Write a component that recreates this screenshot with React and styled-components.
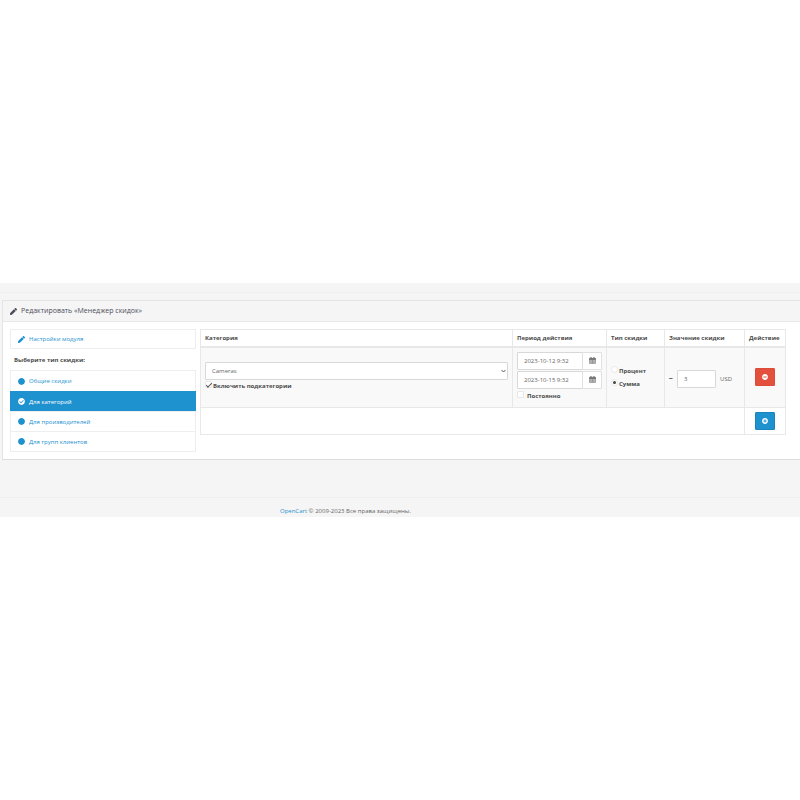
import React, { useState } from 'react';
import styled, { createGlobalStyle, css } from 'styled-components';
import { FaPen, FaCheckCircle, FaCircle, FaMinusCircle, FaPlusCircle } from 'react-icons/fa';

const GlobalStyle = createGlobalStyle`
  *, *::before, *::after { box-sizing: border-box; }
  body {
    margin: 0;
    background: #fff;
    color: #666;
    font-family: "Open Sans", "Noto Sans", sans-serif;
    font-size: 6px;
    line-height: 10px;
  }
  button, input, select { font: inherit; color: inherit; }
`;

const Page = styled.div`
  margin-top: 283px;
  background: #f5f5f5;
  overflow: hidden;
`;

const PageHeader = styled.header`
  height: 10px;
  margin-bottom: 7px;
  border-bottom: 1px solid #eee;
`;

const Panel = styled.section`
  margin-left: 2px;
  background: #fff;
  border: 1px solid #e4e4e4;
  border-right: 0;
  border-bottom-color: #dcdcdc;
`;

const PanelHeading = styled.div`
  display: flex;
  align-items: center;
  gap: 4px;
  height: 21px;
  padding: 0 7px;
  background: #f5f5f5;
  border-bottom: 1px solid #e8e8e8;
  color: #4c4d5a;
`;

const PanelTitle = styled.h1`
  margin: 0;
  font-size: 7px;
  font-weight: 400;
`;

const PanelBody = styled.div`
  display: grid;
  grid-template-columns: 186px minmax(0, 1fr);
  gap: 4px;
  align-items: start;
  padding: 7px 14px 7px 7px;
`;

const NavGroup = styled.nav`
  display: flex;
  flex-direction: column;
  border: 1px solid #eee;
`;

const NavLink = styled.a`
  display: flex;
  align-items: center;
  gap: 4px;
  height: ${(p) => (p.$single ? 18 : 20)}px;
  padding: 0 7px;
  color: #1e91cf;
  text-decoration: none;
  & + & { border-top: 1px solid #eee; }
  svg { width: 7px; height: 7px; flex: none; }
  ${(p) =>
    p.$active &&
    css`
      margin: 0 -1px;
      padding: 0 8px;
      background: #1e91cf;
      color: #fff;
      && { border-top-color: #1e91cf; }
    `}
`;

const NavCaption = styled.div`
  padding: 6px 4px 5px;
  font-weight: 700;
  color: #4c4c4c;
`;

const Table = styled.table`
  width: 100%;
  table-layout: fixed;
  border-collapse: collapse;
  border: 1px solid #e8e8e8;
`;

const Col = styled.col`
  width: ${(p) => p.$w}px;
`;

const Th = styled.th`
  height: 17px;
  padding: 0 4px;
  border: 1px solid #e8e8e8;
  border-bottom: 2px solid #e8e8e8;
  text-align: left;
  white-space: nowrap;
  color: #4c4c4c;
`;

const Td = styled.td`
  height: ${(p) => p.$h}px;
  padding: 0 4px;
  border: 1px solid #e8e8e8;
  background: ${(p) => (p.$shaded ? '#f9f9f9' : '#fff')};
  text-align: ${(p) => (p.$center ? 'center' : 'left')};
  vertical-align: middle;
`;

const SelectWrap = styled.div`
  position: relative;
  display: block;
  svg {
    position: absolute;
    right: 2px;
    top: 7px;
    width: 5px;
    height: 4px;
    pointer-events: none;
  }
`;

const controlBox = css`
  height: 18px;
  padding: 0 6px;
  background: #fff;
  border: 1px solid #d8d8d8;
  border-radius: 1px;
  outline: none;
`;

const Select = styled.select`
  ${controlBox}
  display: block;
  width: 100%;
  appearance: none;
`;

const TextInput = styled.input`
  ${controlBox}
  min-width: 0;
  width: ${(p) => (p.$w ? `${p.$w}px` : '100%')};
`;

const DateGroup = styled.div`
  display: flex;
  margin-bottom: 1px;
`;

const CalendarButton = styled.button`
  flex: none;
  display: flex;
  align-items: center;
  justify-content: center;
  width: 20px;
  height: 18px;
  margin-left: -1px;
  padding: 0;
  background: #fff;
  border: 1px solid #e0e0e0;
  border-radius: 1px;
  color: #666;
`;

const Option = styled.label`
  display: flex;
  align-items: center;
  gap: ${(p) => p.$gap || 1}px;
  height: 13px;
  font-weight: 700;
  color: #4c4c4c;
  white-space: nowrap;
`;

const markBox = css`
  appearance: none;
  flex: none;
  display: grid;
  place-items: center;
  width: 7px;
  height: 7px;
  margin: 0 0 3px;
  background: #fff;
  border: 1px solid #e8e8e8;
`;

const Check = styled.input`
  ${markBox}
  border-radius: 1px;
  &:checked::after {
    content: "";
    width: 6px;
    height: 3px;
    border: solid #555;
    border-width: 0 0 1px 1px;
    transform: rotate(-45deg);
  }
`;

const Radio = styled.input`
  ${markBox}
  border-radius: 50%;
  &:checked::after {
    content: "";
    width: 3px;
    height: 3px;
    border-radius: 50%;
    background: #444;
  }
`;

const Amount = styled.div`
  display: flex;
  align-items: center;
  gap: 4px;
  margin-top: 4px;
`;

const Minus = styled.b`
  font-size: 7px;
  color: #444;
`;

const ActionButton = styled.button`
  display: inline-flex;
  align-items: center;
  justify-content: center;
  vertical-align: middle;
  width: 20px;
  height: 18px;
  padding: 0;
  border: 1px solid ${(p) => (p.$danger ? '#dd4b39' : '#1a84bd')};
  border-radius: 1px;
  background: ${(p) => (p.$danger ? '#e3503e' : '#1e91cf')};
  color: #fff;
  svg { width: 6px; height: 6px; }
`;

const Footer = styled.footer`
  display: flex;
  justify-content: center;
  margin-top: 37px;
  padding: 8px 109px 1px 0;
  border-top: 1px solid #eee;
`;

const FooterLink = styled.a`
  color: #1e91cf;
  text-decoration: none;
`;

const NAV = ['Общие скидки', 'Для категорий', 'Для производителей', 'Для групп клиентов'];

function CalendarIcon() {
  return (
    <svg width="7" height="7" viewBox="0 0 14 14" fill="none" stroke="currentColor">
      <path d="M1 2.5h12v3H1z" fill="currentColor" />
      <path d="M4 0v3M10 0v3" strokeWidth="2" />
      <path d="M1 3v10h12V3M1 8h12M1 10.500h12M4 5v8M7 5v8M10 5v8" />
    </svg>
  );
}

function DateField({ label, value }) {
  return (
    <DateGroup>
      <TextInput aria-label={label} defaultValue={value} />
      <CalendarButton type="button" aria-label={`${label}: календарь`}>
        <CalendarIcon />
      </CalendarButton>
    </DateGroup>
  );
}

export default function App() {
  const [active, setActive] = useState(1);
  return (
    <>
      <GlobalStyle />
      <Page>
        <PageHeader />
        <Panel>
          <PanelHeading>
            <FaPen size={7} />
            <PanelTitle>Редактировать «Менеджер скидок»</PanelTitle>
          </PanelHeading>
          <PanelBody>
            <div>
              <NavGroup>
                <NavLink href="#settings" $single>
                  <FaPen />
                  Настройки модуля
                </NavLink>
              </NavGroup>
              <NavCaption>Выберите тип скидки:</NavCaption>
              <NavGroup>
                {NAV.map((name, i) => (
                  <NavLink key={name} href={`#type-${i}`} $active={i === active} onClick={() => setActive(i)}>
                    {i === active ? <FaCheckCircle /> : <FaCircle />}
                    {name}
                  </NavLink>
                ))}
              </NavGroup>
            </div>
            <Table>
              <colgroup>
                <col />
                <Col $w={94} />
                <Col $w={58} />
                <Col $w={80} />
                <Col $w={41} />
              </colgroup>
              <thead>
                <tr>
                  <Th>Категория</Th>
                  <Th>Период действия</Th>
                  <Th>Тип скидки</Th>
                  <Th>Значение скидки</Th>
                  <Th>Действие</Th>
                </tr>
              </thead>
              <tbody>
                <tr>
                  <Td $h={61} $shaded>
                    <SelectWrap>
                      <Select aria-label="Категория" defaultValue="Cameras">
                        <option>Cameras</option>
                      </Select>
                      <svg viewBox="0 0 10 8" fill="none" stroke="#555" strokeWidth="2">
                        <path d="M1 2l4 4 4-4" />
                      </svg>
                    </SelectWrap>
                    <Option>
                      <Check type="checkbox" defaultChecked />
                      Включить подкатегории
                    </Option>
                  </Td>
                  <Td $h={61} $shaded>
                    <DateField label="Дата начала" value="2023-10-12 9:32" />
                    <DateField label="Дата окончания" value="2023-10-15 9:32" />
                    <Option $gap={3}>
                      <Check type="checkbox" />
                      Постоянно
                    </Option>
                  </Td>
                  <Td $h={61} $shaded>
                    <Option>
                      <Radio type="radio" name="kind" />
                      Процент
                    </Option>
                    <Option>
                      <Radio type="radio" name="kind" defaultChecked />
                      Сумма
                    </Option>
                  </Td>
                  <Td $h={61} $shaded>
                    <Amount>
                      <Minus>−</Minus>
                      <TextInput $w={39} aria-label="Значение скидки" defaultValue="3" />
                      <span>USD</span>
                    </Amount>
                  </Td>
                  <Td $h={61} $shaded $center>
                    <ActionButton type="button" $danger aria-label="Удалить">
                      <FaMinusCircle />
                    </ActionButton>
                  </Td>
                </tr>
                <tr>
                  <Td $h={27} colSpan={4} />
                  <Td $h={27} $center>
                    <ActionButton type="button" aria-label="Добавить">
                      <FaPlusCircle />
                    </ActionButton>
                  </Td>
                </tr>
              </tbody>
            </Table>
          </PanelBody>
        </Panel>
        <Footer>
          <span>
            <FooterLink href="#opencart">OpenCart</FooterLink> © 2009-2023 Все права защищены.
          </span>
        </Footer>
      </Page>
    </>
  );
}
